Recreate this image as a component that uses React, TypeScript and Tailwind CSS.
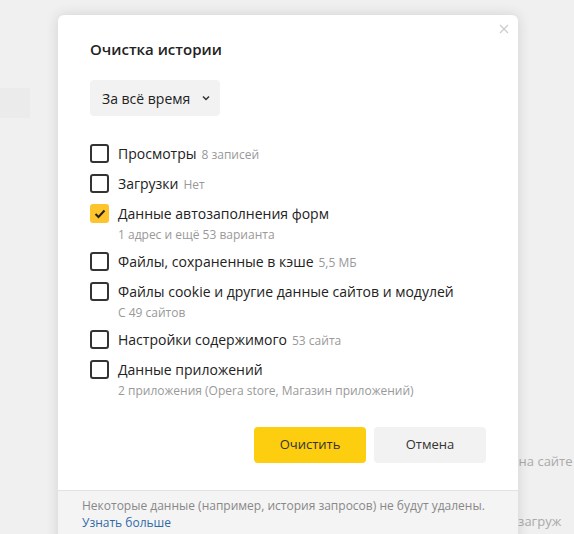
import React, { useState } from "react";

type Item = {
    label: string;
    note?: string;
    sub?: string;
    checked: boolean;
};

const initialItems: Item[] = [
    { label: "Просмотры", note: "8 записей", checked: false },
    { label: "Загрузки", note: "Нет", checked: false },
    { label: "Данные автозаполнения форм", sub: "1 адрес и ещё 53 варианта", checked: true },
    { label: "Файлы, сохраненные в кэше", note: "5,5 МБ", checked: false },
    { label: "Файлы cookie и другие данные сайтов и модулей", sub: "С 49 сайтов", checked: false },
    { label: "Настройки содержимого", note: "53 сайта", checked: false },
    { label: "Данные приложений", sub: "2 приложения (Opera store, Магазин приложений)", checked: false },
];

const Checkbox = ({ checked }: { checked: boolean }) =>
    checked ? (
        <span className="flex h-[19px] w-[19px] shrink-0 items-center justify-center rounded-[3px] bg-[#fdc42b]">
            <svg width="12" height="10" viewBox="0 0 12 10" fill="none">
                <path d="M1.5 5l3 3 6-6.5" stroke="#222" strokeWidth="2" />
            </svg>
        </span>
    ) : (
        <span className="h-[19px] w-[19px] shrink-0 rounded-[3px] border-2 border-[#333]" />
    );

export default function App() {
    const [items, setItems] = useState(initialItems);

    const toggle = (i: number) =>
        setItems(items.map((it, j) => (j === i ? { ...it, checked: !it.checked } : it)));

    return (
        <div
            className="relative h-[534px] w-[574px] overflow-hidden bg-[#f0f0f0]"
            style={{ fontFamily: '"Open Sans", "Noto Sans", sans-serif' }}
        >
            {/* page behind the dialog */}
            <div className="flex h-full">
                <div className="flex w-[30px] flex-col pt-[88px]">
                    <div className="h-[30px] bg-[#ebebeb]" />
                </div>
                <div className="flex-1" />
                <div className="flex w-[66px] flex-col gap-[40px] overflow-hidden pt-[452px] text-[13px] whitespace-nowrap text-[#aaa]">
                    <span>я на сайте</span>
                    <span>к загруж</span>
                </div>
            </div>

            {/* dialog */}
            <div className="absolute top-[15px] left-[58px] flex h-[540px] w-[460px] flex-col rounded-[6px] bg-white shadow-[0_0_14px_rgba(0,0,0,0.13)]">
                <button className="absolute top-[9px] right-[9px] text-[#ccc]">
                    <svg width="10" height="10" viewBox="0 0 10 10">
                        <path d="M1 1l8 8M9 1l-8 8" stroke="currentColor" strokeWidth="1.3" />
                    </svg>
                </button>

                <div className="flex flex-col px-[32px] pt-[24px]">
                    <h1 className="text-[15px] leading-[20px] font-semibold text-[#222]">Очистка истории</h1>

                    <button className="mt-[21px] flex h-[36px] w-[130px] items-center rounded-[4px] bg-[#f2f2f2] pr-[10px] pl-[12px] text-[14px] whitespace-nowrap text-[#222]">
                        За всё время
                        <svg width="8" height="6" viewBox="0 0 8 6" className="ml-auto">
                            <path d="M1 1.5l3 3 3-3" stroke="#333" strokeWidth="1.5" fill="none" />
                        </svg>
                    </button>

                    <div className="mt-[28px] flex flex-col gap-[9px]">
                        {items.map((it, i) => (
                            <label key={i} className="flex cursor-pointer gap-[9px]" onClick={() => toggle(i)}>
                                <Checkbox checked={it.checked} />
                                <div className="flex flex-col">
                                    <div className="text-[14px] leading-[20px] whitespace-nowrap text-[#222]">
                                        {it.label}
                                        {it.note && <span className="ml-[5px] text-[12px] text-[#999]">{it.note}</span>}
                                    </div>
                                    {it.sub && (
                                        <div className="mt-[3px] text-[12px] leading-[16px] text-[#999]">{it.sub}</div>
                                    )}
                                </div>
                            </label>
                        ))}
                    </div>

                    <div className="mt-[28px] flex justify-end gap-[8px]">
                        <button className="h-[36px] w-[112px] rounded-[4px] bg-[#fdcd0f] text-[13px] text-[#333]">
                            Очистить
                        </button>
                        <button className="h-[36px] w-[112px] rounded-[4px] bg-[#f2f2f2] text-[13px] text-[#333]">
                            Отмена
                        </button>
                    </div>
                </div>

                <div className="mt-[27px] flex-1 border-t border-[#e2e2e2] bg-[#f4f4f4] px-[24px] pt-[6px] text-[12px] leading-[17px]">
                    <div className="text-[#888]">Некоторые данные (например, история запросов) не будут удалены.</div>
                    <a className="text-[#2f6aa8]" href="#">Узнать больше</a>
                </div>
            </div>
        </div>
    );
}
